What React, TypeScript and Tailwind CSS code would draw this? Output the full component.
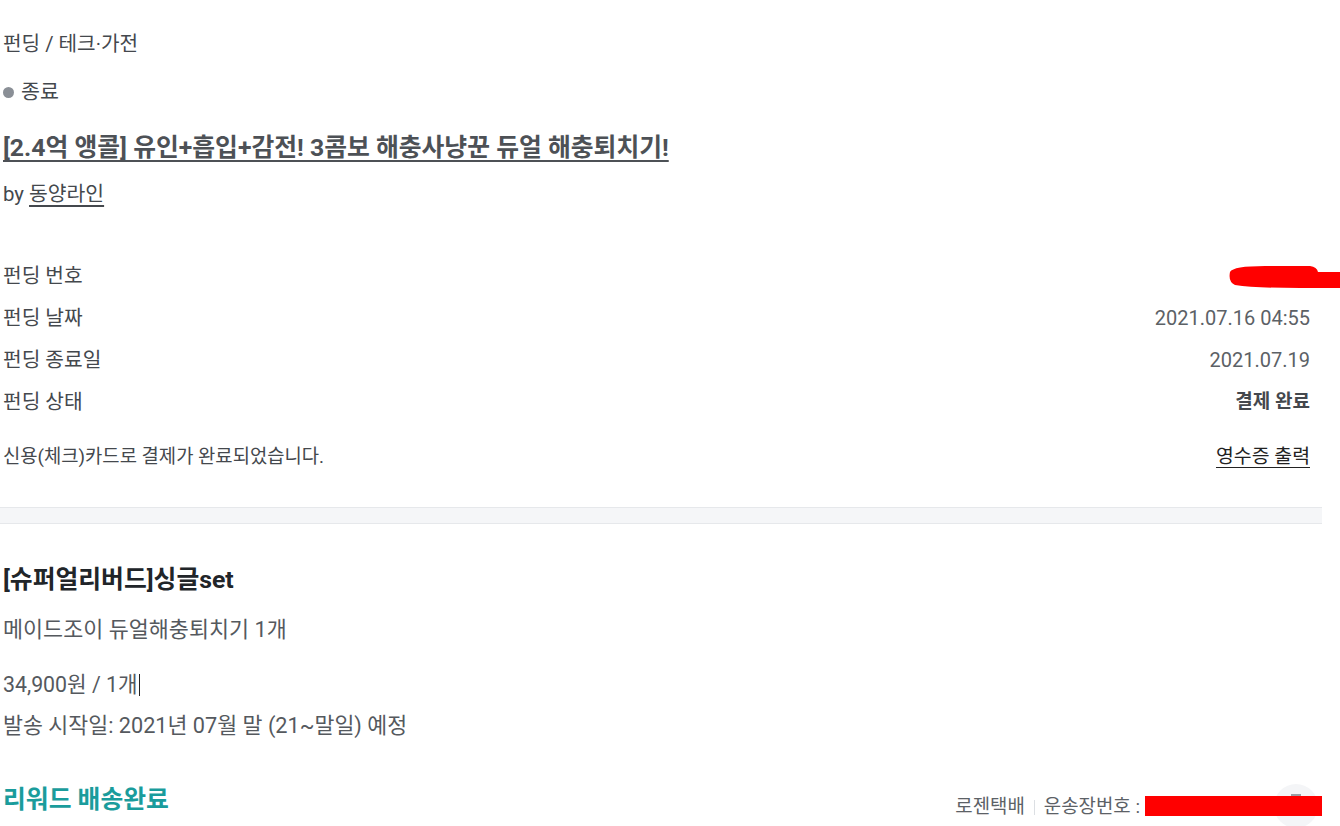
import React from "react";

const font = { fontFamily: "Roboto, 'Noto Sans CJK KR', sans-serif" };

function Row({ label, value, bold }: { label: string; value?: React.ReactNode; bold?: boolean }) {
  return (
    <div className="flex h-[42px] items-center justify-between">
      <span className="text-[20.3px] text-[#44484d]">{label}</span>
      <span className={bold ? "text-[19px] font-bold text-[#44484d]" : "text-[20px] text-[#5c6166]"}>{value}</span>
    </div>
  );
}

export default function App() {
  return (
    <div className="relative h-[826px] w-[1340px] overflow-hidden bg-white" style={font}>
      <div className="w-[1322px]">
        <div className="pl-[3px] pr-[12px] pt-[32px]">
          <div className="h-[24px] text-[20.2px] leading-[24px] text-[#44484d]">펀딩 / 테크·가전</div>
          <div className="mt-[24px] flex h-[24px] items-center gap-[7px] text-[20.6px] leading-[24px] text-[#44484d]">
            <span className="h-[11px] w-[11px] rounded-full bg-[#8a8f96]" />
            <span>종료</span>
          </div>
          <div className="mt-[29px] h-[30px] text-[24.8px] font-bold leading-[30px] text-[#4d5156] underline underline-offset-[4px] decoration-[1.5px]">
            [2.4억 앵콜] 유인+흡입+감전! 3콤보 해충사냥꾼 듀얼 해충퇴치기!
          </div>
          <div className="mt-[19px] h-[24px] text-[20.4px] leading-[24px] text-[#44484d]">
            by <span className="underline underline-offset-[4px]">동양라인</span>
          </div>
          <div className="mt-[49px]">
            <Row label="펀딩 번호" value={<span className="inline-block w-[1px]" />} />
            <Row label="펀딩 날짜" value="2021.07.16 04:55" />
            <Row label="펀딩 종료일" value="2021.07.19" />
            <Row label="펀딩 상태" value="결제 완료" bold />
          </div>
          <div className="mt-[22px] flex h-[24px] items-center justify-between">
            <span className="text-[18.8px] text-[#44484d]">신용(체크)카드로 결제가 완료되었습니다.</span>
            <span className="text-[19.4px] text-[#222] underline underline-offset-[4px]">영수증 출력</span>
          </div>
        </div>
        <div className="mt-[38px] h-[17px] border-y border-[#e6e8eb] bg-[#f5f6f8]" />
        <div className="pl-[3px] pr-[12px]">
          <div className="mt-[41px] h-[30px] text-[24.8px] font-bold leading-[30px] text-[#212529]">[슈퍼얼리버드]싱글set</div>
          <div className="mt-[23px] h-[24px] text-[21.8px] leading-[24px] text-[#55595e]">메이드조이 듀얼해충퇴치기 1개</div>
          <div className="mt-[31px] flex h-[24px] items-center text-[21.3px] leading-[24px] text-[#55595e]">
            <span>34,900원 / 1개</span>
            <span className="ml-[1px] h-[22px] w-[1px] bg-[#222]" />
          </div>
          <div className="mt-[17px] h-[24px] text-[21.7px] leading-[24px] text-[#55595e]">발송 시작일: 2021년 07월 말 (21~말일) 예정</div>
          <div className="mt-[47px] flex h-[30px] items-center justify-between">
            <span className="text-[24.8px] font-bold text-[#1a9c9c]">리워드 배송완료</span>
            <div className="flex items-center pt-[15px] text-[18.9px] text-[#5c6166]">
              <span>로젠택배</span>
              <span className="mx-[9px] h-[15px] w-[1px] bg-[#dcdfe3]" />
              <span>운송장번호 :</span>
              <span className="ml-[4px] inline-block w-[166px]" />
            </div>
          </div>
        </div>
      </div>
      {/* icon button behind redaction */}
      <div className="absolute left-[1274px] top-[784px] flex h-[44px] w-[44px] justify-center rounded-full bg-[#f4f5f7] pt-[10px]">
        <span className="h-[2px] w-[10px] bg-[#9aa0a6]" />
      </div>
      {/* redactions */}
      <svg className="absolute left-[1225px] top-[262px]" width="115" height="30" viewBox="0 0 115 30">
        <path d="M5 10 Q8 4 40 4 L85 4 Q92 5 93 10 L115 10 L115 26 L75 26 Q30 26 10 23 Q3 20 5 10 Z" fill="#ff0000" />
      </svg>
      <div className="absolute left-[1145px] top-[796px] h-[20px] w-[177px] bg-[#ff0000]" />
    </div>
  );
}
